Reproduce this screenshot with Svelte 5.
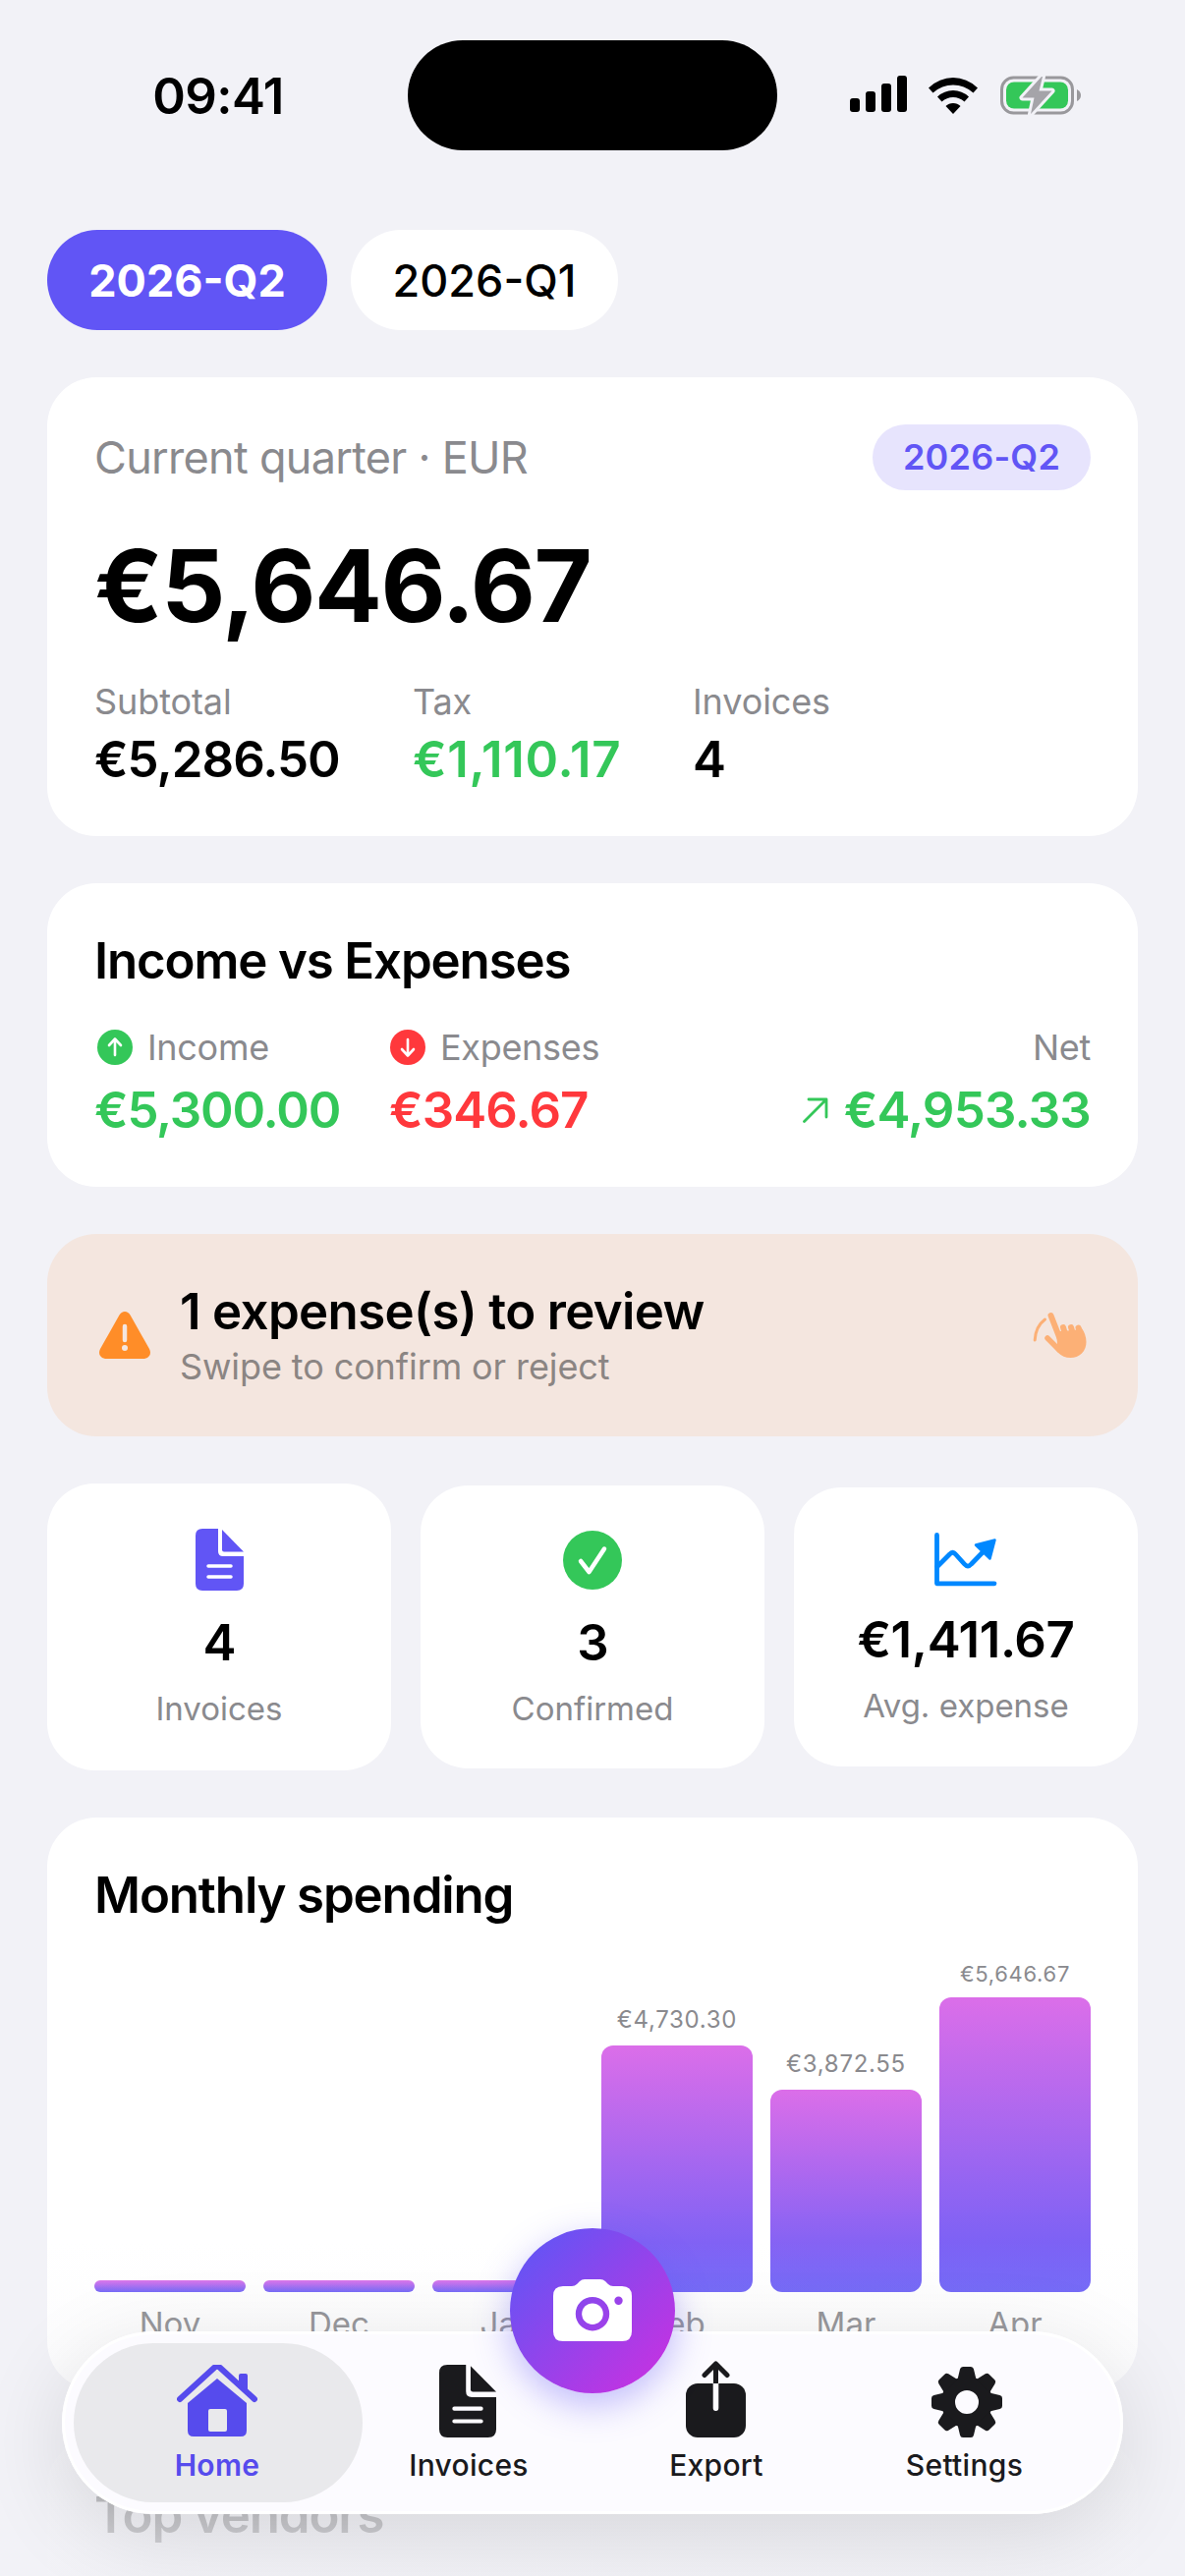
<script>
  const quarterStats = [
    { label: 'Subtotal', value: '€5,286.50' },
    { label: 'Tax', value: '€1,110.17', tone: 'green airy' },
    { label: 'Invoices', value: '4' }
  ];
  const months = [
    { name: 'Nov', height: 12 },
    { name: 'Dec', height: 12 },
    { name: 'Jan', height: 12 },
    { name: 'Feb', height: 251, amount: '€4,730.30' },
    { name: 'Mar', height: 206, amount: '€3,872.55' },
    { name: 'Apr', height: 300, amount: '€5,646.67', small: true }
  ];
</script>

{#snippet docIcon()}
  <path d="M7 0H23V23Q23 28 28 28H49V56Q49 63 42 63H7Q0 63 0 56V7Q0 0 7 0Z" />
  <path d="M27 1L49 23.5H29Q27 23.5 27 21.5Z" />
{/snippet}

<div class="screen">
  <header class="status">
    <div class="time">09:41</div>
    <div class="island"></div>
    <div class="indicators">
      <svg width="58" height="38" viewBox="0 0 58 38">
        <rect x="0" y="23" width="10" height="14" rx="3" />
        <rect x="16" y="16" width="10" height="21" rx="3" />
        <rect x="32" y="8" width="10" height="29" rx="3" />
        <rect x="48" y="0" width="10" height="37" rx="3" />
      </svg>
      <svg class="wifi" width="50" height="37" viewBox="0 0 50 37">
        <path d="M0 10.500Q11 0 25 0T50 10.500L45.500 15.500Q36.500 7.500 25 7.500T4.500 15.500Z" />
        <path d="M9 19.500Q16 13 25 13T41 19.500L36.500 24.500Q31.500 20 25 20T13.500 24.500Z" />
        <path d="M17.500 29Q20.500 26 25 26T32.500 29L25 37Z" />
      </svg>
      <svg class="battery" width="82" height="42" viewBox="0 0 82 42">
        <rect x="1.500" y="3" width="72" height="36" rx="12" fill="none" stroke="#99989c" stroke-width="3" />
        <rect x="6" y="7.500" width="63" height="27" rx="8" fill="#34c759" />
        <path d="M78 15Q82 17 82 21T78 27Z" fill="#99989c" />
        <path d="M42 2L22.500 23.500H34.500L31 40L52.500 16.500H39.500L43 2Z" fill="#a5a4a9" stroke="#f2f2f7" stroke-width="6" stroke-linejoin="round" paint-order="stroke" />
      </svg>
    </div>
  </header>

  <main>
    <div class="quarters">
      <button class="quarter selected"><span>2026-Q2</span></button>
      <button class="quarter"><span>2026-Q1</span></button>
    </div>

    <section class="card summary">
      <div class="summary-head">
        <span class="caption">Current quarter · EUR</span>
        <span class="chip">2026-Q2</span>
      </div>
      <div class="total">€5,646.67</div>
      <div class="columns">
        {#each quarterStats as stat}
          <div class="column">
            <div class="label">{stat.label}</div>
            <div class="value {stat.tone ?? ''}">{stat.value}</div>
          </div>
        {/each}
      </div>
    </section>

    <section class="card balance">
      <h2>Income vs Expenses</h2>
      <div class="flows">
        <div>
          <div class="label">
            <svg width="38" height="38" viewBox="0 0 38 38"><circle cx="19" cy="19" r="18" fill="#34c759" /><path d="M19 27V11M13 17L19 10.500L25 17" class="mark" /></svg>
            Income
          </div>
          <div class="value green">€5,300.00</div>
        </div>
        <div>
          <div class="label">
            <svg width="38" height="38" viewBox="0 0 38 38"><circle cx="19" cy="19" r="18" fill="#ff383c" /><path d="M19 11V27M13 21L19 27.500L25 21" class="mark" /></svg>
            Expenses
          </div>
          <div class="value red">€346.67</div>
        </div>
        <div class="net">
          <div class="label">Net</div>
          <div class="value green">
            <svg width="26" height="26" viewBox="0 0 26 26"><path d="M1.500 24.500L24 2M6 2H24V20" fill="none" stroke="#34c759" stroke-width="2.800" stroke-linecap="round" stroke-linejoin="round" /></svg>
            €4,953.33
          </div>
        </div>
      </div>
    </section>

    <section class="review">
      <svg class="warning" width="54" height="49" viewBox="0 0 54 49">
        <path d="M27 0Q30.500 0 32.500 3.500L52 38Q54 42 52 45T47 48H7Q4 48 2 45T2 38L21.500 3.500Q23.500 0 27 0Z" fill="#ff8d28" />
        <path d="M27 15V29" stroke="#f4e6df" stroke-width="4.500" stroke-linecap="round" />
        <circle cx="27" cy="37" r="3" fill="#f4e6df" />
      </svg>
      <div class="review-text">
        <h2>1 expense(s) to review</h2>
        <p>Swipe to confirm or reject</p>
      </div>
      <svg class="hand" width="56" height="48" viewBox="0 0 56 48">
        <g fill="none" stroke="#fcb076" stroke-linecap="round">
          <path d="M2.200 29Q3 15 12.500 8" stroke-width="3" />
          <path d="M18.500 4L29 31" stroke-width="6" />
          <path d="M15 27L27 39" stroke-width="5.500" />
          <path d="M31 16L34 26M39 16L42 26M46.500 16.500L50 26" stroke-width="6" />
        </g>
        <path d="M24 19L28 20L34.500 19.500L42.500 19L49.500 16.500Q54.500 23 54.500 31Q54.500 38 50 42.500Q45 47 38.500 47Q31 47 25.500 41.500L19 34L25 33Z" fill="#fcb076" />
      </svg>
    </section>

    <section class="tiles">
      <div class="tile t1">
        <svg width="49" height="63" viewBox="0 0 49 63" fill="#6155f5">{@render docIcon()}<path d="M13 38H36M13 49H36" stroke="#fff" stroke-width="3.500" stroke-linecap="round" /></svg>
        <div class="value">4</div>
        <div class="tile-label">Invoices</div>
      </div>
      <div class="tile t2">
        <svg width="60" height="60" viewBox="0 0 60 60"><circle cx="30" cy="30" r="30" fill="#34c759" /><path d="M18 31L26.500 42L42 18.500" fill="none" stroke="#fff" stroke-width="4.500" stroke-linecap="round" stroke-linejoin="round" /></svg>
        <div class="value">3</div>
        <div class="tile-label">Confirmed</div>
      </div>
      <div class="tile t3">
        <svg width="64" height="55" viewBox="0 0 64 55"><g fill="none" stroke="#0088ff" stroke-width="4.800" stroke-linecap="round" stroke-linejoin="round"><path d="M2.500 2.500V51.800H61" /><path d="M3 34.500L15.500 22Q18.500 18.500 21.500 22L30.500 32Q34 36 37.500 32L52 17" /></g><path d="M42 12.500L61.500 7.500L56.500 26.500Z" fill="#0088ff" stroke="#0088ff" stroke-width="2.500" stroke-linejoin="round" /></svg>
        <div class="value">€1,411.67</div>
        <div class="tile-label">Avg. expense</div>
      </div>
    </section>

    <section class="card spending">
      <h2>Monthly spending</h2>
      <div class="chart">
        {#each months as month}
          <div class="month">
            {#if month.amount}<div class="amount" class:small={month.small}>{month.amount}</div>{/if}
            <div class="bar" class:empty={!month.amount} style="height: {month.height}px"></div>
            <div class="name">{month.name}</div>
          </div>
        {/each}
      </div>
    </section>

    <section class="card vendors"><h2>Top vendors</h2></section>
  </main>

  <div class="fade"></div>

  <nav>
    <a class="tab active" href="#home">
      <svg width="82" height="74" viewBox="0 0 82 74">
        <path d="M3 35L38 3Q41 0 44 3L79 35" fill="none" stroke="#564bed" stroke-width="6" stroke-linecap="round" />
        <path d="M63 11Q63 9 65 9H70Q72 9 72 11V28L63 20Z" />
        <path d="M41 14L71 39V67Q71 73 65 73H17Q11 73 11 67V39Z" />
        <rect x="32" y="45" width="19" height="23" rx="2" fill="#e9e9ec" />
      </svg>
      <span>Home</span>
    </a>
    <a class="tab" href="#invoices">
      <svg class="doc" width="58" height="74" viewBox="0 0 49 63" preserveAspectRatio="none">{@render docIcon()}<path d="M13 38H36M13 49H36" stroke="#fcfbff" stroke-width="3.500" stroke-linecap="round" /></svg>
      <span>Invoices</span>
    </a>
    <a class="tab" href="#export">
      <svg width="62" height="78" viewBox="0 0 62 78">
        <rect x="0" y="23" width="61" height="55" rx="12" />
        <path d="M30.500 24V3M19 14.500L30.500 3L42 14.500" fill="none" stroke="#1a1a1d" stroke-width="5" stroke-linecap="round" stroke-linejoin="round" />
        <path d="M27.700 23H33.300V48Q33.300 51 30.500 51T27.700 48Z" fill="#fdfcff" />
      </svg>
      <span>Export</span>
    </a>
    <a class="tab" href="#settings">
      <svg class="gear" width="72" height="72" viewBox="-36 -36 72 72">
        <circle r="19" fill="none" stroke="#1a1a1d" stroke-width="14" />
        {#each [0, 45, 90, 135, 180, 225, 270, 315] as angle}
          <path d="M-9.500-23L-7-33.500Q-6.500-36-4-36H4Q6.500-36 7-33.500L9.500-23Z" transform="rotate({angle})" />
        {/each}
      </svg>
      <span>Settings</span>
    </a>
  </nav>

  <button class="camera" aria-label="Scan">
    <svg width="80" height="64" viewBox="0 0 80 64">
      <path fill-rule="evenodd" d="M10 7H19Q22 7 24 5L27 2Q29 0 32 0H48Q51 0 53 2L56 5Q58 7 61 7H70Q80 7 80 17V53Q80 63 70 63H10Q0 63 0 53V17Q0 7 10 7ZM40 18A17.200 17.200 0 1 0 40 52.400A17.200 17.200 0 1 0 40 18ZM66.500 17.500A4.200 4.200 0 1 0 66.500 25.900A4.200 4.200 0 1 0 66.500 17.500Z" fill="#fff" />
      <circle cx="40" cy="35.200" r="10.800" fill="#fff" />
    </svg>
  </button>
</div>

<style>
  :global(body) { margin: 0; background: #f2f2f7; }
  .screen {
    position: relative;
    width: 1206px;
    height: 2622px;
    overflow: hidden;
    background: #f2f2f7;
    color: #000;
    font-family: Inter, 'Liberation Sans', sans-serif;
  }
  svg { display: block; flex: none; }
  h2, p { margin: 0; }
  button { border: 0; font: inherit; }

  .status {
    display: grid;
    grid-template-columns: 415px 376px 415px;
    height: 193px;
    box-sizing: border-box;
    padding-top: 41px;
    align-items: start;
  }
  .time { margin: 27px 0 0 29px; text-align: center; font-size: 51px; line-height: 60px; font-weight: 600; letter-spacing: -0.6px; }
  .island { height: 112px; border-radius: 56px; background: #000; }
  .indicators { display: flex; padding: 36px 0 0 74px; }
  .wifi { margin-left: 22px; margin-top: 2px; }
  .battery { margin-left: 23px; margin-top: -1px; }

  main { padding: 41px 48px 0; }
  .quarters { display: flex; gap: 24px; margin-bottom: 48px; }
  .quarter { height: 102px; width: 272px; padding: 0; border-radius: 51px; background: #fff; color: #000; font-size: 45px; font-weight: 500; letter-spacing: 0; }
  .quarter.selected { width: 285px; background: #6155f5; color: #fff; font-weight: 700; letter-spacing: 0; }

  .card { background: #fff; border-radius: 50px; box-sizing: border-box; padding: 48px; margin-bottom: 48px; }
  h2 { font-size: 51px; line-height: 61px; font-weight: 600; letter-spacing: -1.15px; }
  .summary { height: 467px; }
  .summary-head { display: flex; justify-content: space-between; align-items: center; height: 67px; }
  .caption { font-size: 45px; color: #8a8a8e; letter-spacing: -0.7px; }
  .chip { width: 222px; height: 67px; line-height: 67px; text-align: center; border-radius: 34px; background: #e7e4fd; color: #6155f5; font-size: 36px; font-weight: 600; letter-spacing: 0.2px; }
  .total { font-size: 102px; line-height: 122px; margin-top: 36px; font-weight: 700; letter-spacing: -1.5px; }
  .columns { display: flex; gap: 72px; margin-top: 33px; }
  .column { width: 252px; }
  .column:nth-child(2) { width: 213px; }
  .label { display: flex; align-items: center; color: #8a8a8e; font-size: 36px; line-height: 48px; letter-spacing: -0.1px; }
  .value { font-size: 51px; line-height: 61px; font-weight: 600; letter-spacing: -1px; white-space: nowrap; }
  .columns .value { margin-top: 4px; }
  .green { color: #34c759; }
  .red { color: #ff383c; }
  .columns .airy { letter-spacing: 0.7px; }

  .balance { height: 309px; }
  .flows { display: flex; gap: 48px; margin-top: 36px; }
  .flows > div { width: 250px; }
  .flows .label { gap: 14px; line-height: 44px; padding-left: 2px; letter-spacing: -0.3px; }
  .flows .value { margin-top: 11px; letter-spacing: -1.2px; }
  .flows .red { padding-left: 2px; letter-spacing: -0.9px; }
  .mark { fill: none; stroke: #fff; stroke-width: 2.6px; stroke-linecap: round; stroke-linejoin: round; }
  .flows > .net { width: auto; margin-left: auto; }
  .net .label { justify-content: flex-end; }
  .flows .net .value { display: flex; gap: 16px; align-items: center; letter-spacing: -0.8px; }

  .review { height: 206px; box-sizing: border-box; display: flex; align-items: center; padding: 0 51px 0 52px; border-radius: 50px; background: #f4e6df; margin-bottom: 48px; }
  .review-text { margin-left: 29px; flex: 1; }
  .review-text h2 { letter-spacing: -0.65px; }
  .review-text p { font-size: 36px; line-height: 45px; margin-top: 4px; color: #8b8583; letter-spacing: -0.1px; }

  .tiles { display: grid; grid-template-columns: repeat(3, 350px); justify-content: space-between; align-items: center; height: 292px; margin-bottom: 48px; }
  .tile { display: flex; flex-direction: column; align-items: center; background: #fff; border-radius: 48px; box-sizing: border-box; padding-top: 46px; height: 292px; }
  .tile .value { margin-top: 22px; }
  .tile-label { margin-top: 17px; font-size: 33px; line-height: 40px; color: #8a8a8e; }
  .t2 { height: 288px; }
  .t2 .value { margin-top: 23px; }
  .t3 { height: 284px; }
  .t3 .value { margin-top: 23px; letter-spacing: -0.4px; }

  .spending { height: 583px; }
  .chart { display: grid; grid-template-columns: repeat(6, 154px); gap: 18px; height: 412px; margin-top: 14px; }
  .month { display: flex; flex-direction: column; align-items: center; justify-content: flex-end; }
  .amount { font-size: 24px; line-height: 30px; color: #8a8a8e; margin-bottom: 11px; letter-spacing: 0.7px; }
  .amount.small { font-size: 22px; line-height: 28px; margin-bottom: 10px; }
  .bar { width: 154px; flex: none; border-radius: 12px; background: linear-gradient(#db6ee9, #6a5ff7); }
  .bar.empty { border-radius: 6px; }
  .name { color: #8a8a8e; font-size: 33px; line-height: 40px; margin-top: 12px; }
  .vendors { height: 300px; background: rgba(255, 255, 255, .3); }

  .fade { position: absolute; left: 0; right: 0; bottom: 0; height: 340px; background: linear-gradient(rgba(242, 242, 247, 0), rgba(242, 242, 247, .18) 32%, rgba(242, 242, 247, .78) 75%, rgba(242, 242, 247, .9)); }

  nav {
    position: absolute;
    left: 63px;
    top: 2373px;
    width: 1080px;
    height: 186px;
    box-sizing: border-box;
    padding: 12px;
    display: grid;
    grid-template-columns: 294px 216px 288px 217px;
    border-radius: 93px;
    background: #fcfbff;
    box-shadow: 0 20px 90px rgba(0, 0, 0, .12), inset 0 0 0 3px #fff;
  }
  .tab { display: flex; flex-direction: column; align-items: center; justify-content: flex-end; box-sizing: border-box; height: 162px; padding-bottom: 20px; border-radius: 81px; color: #1a1a1d; fill: #1a1a1d; text-decoration: none; }
  .tab span { font-size: 30px; line-height: 36px; margin-top: 10px; font-weight: 500; letter-spacing: 0.3px; }
  .doc { margin-right: 3px; }
  .gear { margin-left: 4px; }
  .active { background: #e9e9ec; color: #564bed; fill: #564bed; padding-right: 2px; }
  .active span { font-weight: 600; }

  .camera { position: absolute; left: 519px; top: 2268px; width: 168px; height: 168px; padding: 0; border-radius: 50%; display: grid; place-items: center; background: linear-gradient(135deg, #6155f5 8%, #cb30e0 96%); box-shadow: 0 12px 36px rgba(97, 85, 245, .38); }
</style>
